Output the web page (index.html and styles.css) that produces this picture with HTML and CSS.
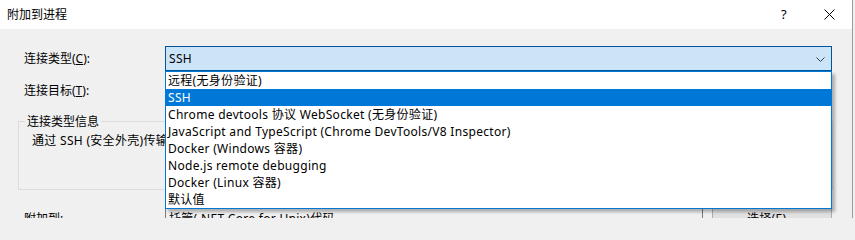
FILE: index.html
```html
<!DOCTYPE html>
<html lang="zh-CN">
<head>
<meta charset="utf-8">
<title>附加到进程</title>
<link rel="stylesheet" href="styles.css">
</head>
<body>
<div class="window">
  <div class="titlebar">
    <span class="title">附加到进程</span>
    <span class="help">?</span>
    <svg class="close" width="11" height="11" viewBox="0 0 11 11"><path d="M0.5 0.5 L10.5 10.5 M10.5 0.5 L0.5 10.5" stroke="#000" stroke-width="1" fill="none"/></svg>
  </div>
  <div class="main">
    <div class="row row-type">
      <span class="label">连接类型(<u>C</u>):</span>
      <div class="combo-wrap">
        <div class="combo">
          <span class="combo-value">SSH</span>
          <svg class="chev" width="9" height="5" viewBox="0 0 9 5"><path d="M0.5 0.5 L4.5 4.5 L8.5 0.5" stroke="#3c3c3c" stroke-width="1" fill="none"/></svg>
        </div>
        <ul class="dropdown">
          <li>远程(无身份验证)</li>
          <li class="sel">SSH</li>
          <li>Chrome devtools 协议 WebSocket (无身份验证)</li>
          <li>JavaScript and TypeScript (Chrome DevTools/V8 Inspector)</li>
          <li>Docker (Windows 容器)</li>
          <li>Node.js remote debugging</li>
          <li>Docker (Linux 容器)</li>
          <li>默认值</li>
        </ul>
      </div>
    </div>
    <div class="row row-target">
      <span class="label">连接目标(<u>T</u>):</span>
    </div>
    <fieldset class="group">
      <legend>连接类型信息</legend>
      <p class="desc">通过 SSH (安全外壳)传输协议连接到远程计算机。</p>
    </fieldset>
    <div class="row row-attach">
      <span class="label">附加到:</span>
      <div class="textbox">托管(.NET Core for Unix)代码</div>
      <div class="button">选择(<u>E</u>)...</div>
    </div>
  </div>
</div>
</body>
</html>
```

FILE: styles.css
```css
html, body {
  margin: 0;
  padding: 0;
  background: #f0f0f0;
}
body {
  font-family: "Noto Sans", "Noto Sans CJK SC", sans-serif;
  font-size: 12px;
  letter-spacing: 0.3px;
  color: #000;
  overflow: hidden;
}
.window {
  width: 852px;
  height: 218px;
  border-right: 1px solid #9a9a9a;
  background: #f0f0f0;
  overflow: hidden;
}
.titlebar {
  height: 29px;
  background: #fff;
  display: flex;
  align-items: center;
}
.title {
  padding-left: 7px;
  flex: 1;
  line-height: 17px;
  letter-spacing: 0;
}
.help {
  width: 10px;
  font-size: 13px;
  line-height: 17px;
  margin-right: 33px;
}
.close {
  margin-right: 17px;
  margin-top: -1px;
}
.main {
  padding: 17px 0 0 18px;
}
.row {
  display: flex;
  align-items: center;
  height: 25px;
}
.label {
  width: 147px;
  padding-left: 6px;
  box-sizing: border-box;
  line-height: 17px;
  flex: none;
  letter-spacing: 0;
}
.combo-wrap {
  position: relative;
  width: 667px;
  height: 25px;
  z-index: 2;
}
.combo {
  box-sizing: border-box;
  height: 25px;
  border: 1px solid #005499;
  background: #cce4f7;
  display: flex;
  align-items: center;
  padding-left: 3px;
}
.combo-value {
  flex: 1;
  line-height: 17px;
}
.chev {
  margin-right: 6px;
  margin-top: 2px;
}
.dropdown {
  position: absolute;
  left: 0;
  top: 25px;
  width: 667px;
  box-sizing: border-box;
  margin: 0;
  padding: 0;
  list-style: none;
  background: #fff;
  border: 1px solid #0078d7;
  box-shadow: 3px 3px 3px rgba(0, 0, 0, 0.28);
}
.dropdown li {
  height: 17px;
  line-height: 17px;
  padding-left: 2px;
  white-space: nowrap;
}
.dropdown li.sel {
  background: #0078d7;
  color: #fff;
}
.row-target {
  margin-top: 7px;
}
.group {
  margin: 10px 0 0 0;
  width: 815px;
  box-sizing: border-box;
  border: 1px solid #dcdcdc;
  padding: 2px 12px 40px 13px;
  min-width: 0;
}
.group legend {
  padding: 0 2px;
  margin-left: -7px;
  line-height: 17px;
  letter-spacing: 0;
}
.desc {
  margin: 0;
  line-height: 17px;
  white-space: nowrap;
}
.row-attach {
  margin-top: 16px;
}
.textbox {
  box-sizing: border-box;
  width: 538px;
  height: 23px;
  border: 1px solid #7a7a7a;
  background: #f0f0f0;
  padding-left: 3px;
  line-height: 21px;
  white-space: nowrap;
  overflow: hidden;
}
.button {
  box-sizing: border-box;
  width: 120px;
  height: 23px;
  margin-left: 9px;
  border: 1px solid #adadad;
  background: #e1e1e1;
  text-align: center;
  line-height: 21px;
}
```
